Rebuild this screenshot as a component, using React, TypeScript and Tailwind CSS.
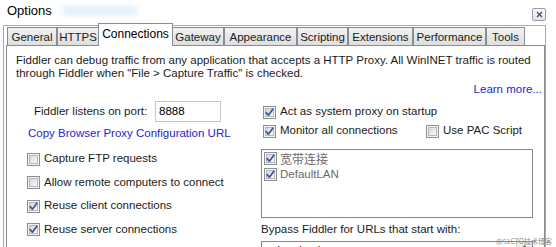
import React from "react";

function CheckBox({ checked = false }: { checked?: boolean }) {
    return (
        <svg width="13" height="13" viewBox="0 0 13 13" className="shrink-0">
            <defs>
                <linearGradient id="cbfill" x1="0" y1="0" x2="1" y2="1">
                    <stop offset="0" stopColor="#d6d6d6" />
                    <stop offset="1" stopColor="#fbfbfb" />
                </linearGradient>
            </defs>
            <rect x="0.5" y="0.5" width="12" height="12" fill="#f4f4f4" stroke="#8e8f8f" />
            <rect x="2.5" y="2.5" width="8" height="8" fill="url(#cbfill)" stroke="#b4b7bb" />
            {checked && (
                <path
                    d="M3.2 6.6 L5.4 9.2 L9.8 3.2"
                    stroke="#3b5797"
                    strokeWidth="1.7"
                    fill="none"
                    strokeLinecap="round"
                    strokeLinejoin="round"
                />
            )}
        </svg>
    );
}

function Option({ label, checked }: { label: string; checked?: boolean }) {
    return (
        <div className="flex items-center gap-[4px] h-[14px]">
            <CheckBox checked={checked} />
            <span className="whitespace-nowrap">{label}</span>
        </div>
    );
}

const tabs = [
    { name: "General", w: "w-[50px]" },
    { name: "HTTPS", w: "w-[42px]" },
    { name: "Connections", w: "w-[75px]", active: true },
    { name: "Gateway", w: "w-[52px]" },
    { name: "Appearance", w: "w-[73px]" },
    { name: "Scripting", w: "w-[51px]" },
    { name: "Extensions", w: "w-[65px]" },
    { name: "Performance", w: "w-[73px]" },
    { name: "Tools", w: "w-[39px]" },
];

export default function App() {
    return (
        <div className="relative w-[556px] h-[247px] overflow-hidden bg-white text-[11.5px] text-[#1b1b1b] font-['Liberation_Sans',Arial,sans-serif]">
            {/* title bar */}
            <div className="flex items-start justify-between h-[25px]">
                <div className="flex items-center pl-[7px] pt-[3px]">
                    <span className="text-[13px] leading-[16px] text-black">Options</span>
                    <div className="ml-[10px] w-[75px] h-[8px] rounded-full bg-[#d9ecfb] blur-[3px]" />
                </div>
                <div className="mt-[8px] mr-[10px] w-[14px] h-[13px] border border-[#9a9ea6] rounded-[2px] bg-gradient-to-b from-[#f6f8fb] to-[#dfe4ea] flex items-center justify-center">
                    <svg width="7" height="7" viewBox="0 0 7 7">
                        <path d="M1 1 L6 6 M6 1 L1 6" stroke="#4a4f57" strokeWidth="1.3" />
                    </svg>
                </div>
            </div>

            {/* tab control */}
            <div className="ml-[3px] w-[543px] h-[222px] border-l border-t border-r border-[#a7a9ad]">
                <div className="flex items-end h-[19px] pl-[3px]">
                    {tabs.map((t) =>
                        t.active ? (
                            <div
                                key={t.name}
                                className={`relative z-10 ${t.w} h-[23px] -mb-[1px] -mx-[1px] bg-white border-l border-t border-r border-[#898c95] flex items-start justify-center pt-[3px] text-[12px] leading-[14px] text-black`}
                            >
                                {t.name}
                            </div>
                        ) : (
                            <div
                                key={t.name}
                                className={`${t.w} h-[18px] bg-gradient-to-b from-[#f3f3f3] to-[#dedede] border-l border-t border-r border-[#898c95] flex items-center justify-center leading-[14px]`}
                            >
                                {t.name}
                            </div>
                        )
                    )}
                </div>

                <div className="ml-[2px] w-[539px] h-[210px] border border-[#898c95] bg-white pl-[9px] pt-[8px]">
                    <p className="leading-[13px] whitespace-nowrap">
                        Fiddler can debug traffic from any application that accepts a HTTP Proxy. All WinINET traffic is routed
                        <br />
                        through Fiddler when "File &gt; Capture Traffic" is checked.
                    </p>
                    <div className="flex justify-end pr-[2px] mt-[3px] leading-[13px]">
                        <span className="text-[#2323dc]">Learn more...</span>
                    </div>

                    <div className="flex mt-[5px]">
                        {/* left column */}
                        <div className="w-[245px] flex flex-col">
                            <div className="flex items-center h-[21px] pl-[18px]">
                                <span className="w-[121px] whitespace-nowrap">Fiddler listens on port:</span>
                                <div className="w-[66px] h-[21px] border border-[#c3c6cc] flex items-center pl-[3px] text-black">
                                    8888
                                </div>
                            </div>
                            <div className="mt-[4px] pl-[12px] leading-[14px] text-[#2323dc] whitespace-nowrap">
                                Copy Browser Proxy Configuration URL
                            </div>
                            <div className="mt-[12px] pl-[11px] flex flex-col gap-[9.5px]">
                                <Option label="Capture FTP requests" />
                                <Option label="Allow remote computers to connect" />
                                <Option label="Reuse client connections" checked />
                                <Option label="Reuse server connections" checked />
                            </div>
                        </div>

                        {/* right column */}
                        <div className="flex flex-col">
                            <div className="mt-[4px] pl-[2px]">
                                <Option label="Act as system proxy on startup" checked />
                            </div>
                            <div className="mt-[5px] pl-[2px] flex">
                                <div className="w-[163px]">
                                    <Option label="Monitor all connections" checked />
                                </div>
                                <Option label="Use PAC Script" />
                            </div>
                            <div className="mt-[11px] w-[272px] h-[69px] border border-[#828790] pl-[2px] pt-[2px] flex flex-col gap-[3px] text-[#6a6a6a]">
                                <div className="flex items-center gap-[3px] h-[13px]">
                                    <CheckBox checked />
                                    <span className="font-['Noto_Sans_CJK_SC',sans-serif] text-[12px]">宽带连接</span>
                                </div>
                                <div className="flex items-center gap-[3px] h-[13px]">
                                    <CheckBox checked />
                                    <span>DefaultLAN</span>
                                </div>
                            </div>
                            <div className="mt-[4px] leading-[14px] whitespace-nowrap">
                                Bypass Fiddler for URLs that start with:
                            </div>
                            <div className="mt-[5px] w-[272px] h-[30px] border border-[#828790] flex">
                                <div className="flex-1 pl-[5px] pt-[1px] leading-[14px]">&lt;-loopback&gt;</div>
                                <div className="w-[16px] bg-[#eeeeee] border-l border-[#dcdcdc] flex justify-center pt-[3px]">
                                    <svg width="7" height="4" viewBox="0 0 7 4">
                                        <path d="M0 4 L3.5 0 L7 4 Z" fill="#5f5f5f" />
                                    </svg>
                                </div>
                            </div>
                        </div>
                    </div>
                </div>
            </div>

            {/* watermark */}
            <div className="absolute right-[4px] bottom-[2px] text-[7px] leading-[8px] text-[#8a8a8a] font-['Noto_Sans_CJK_SC',sans-serif]">
                @51CTO技术博客
            </div>
        </div>
    );
}
